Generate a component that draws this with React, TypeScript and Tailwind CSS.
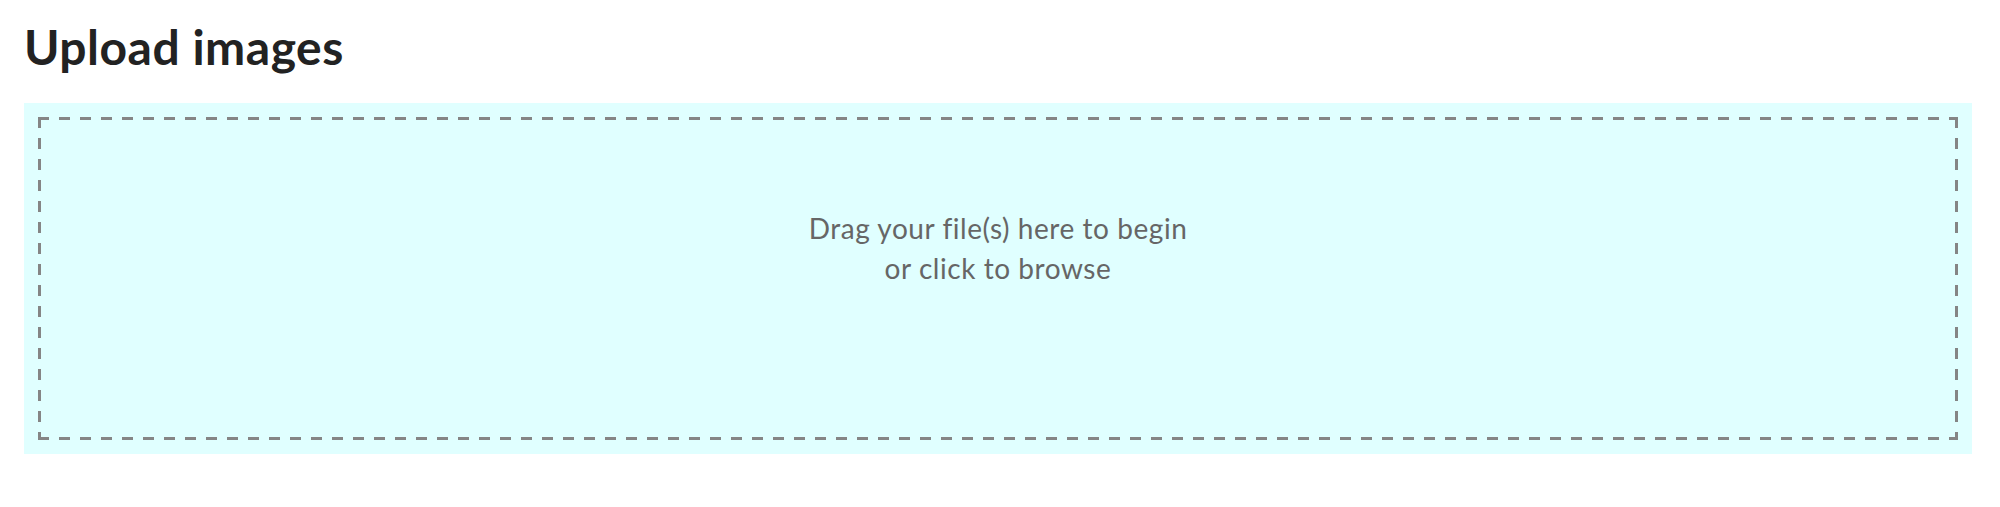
export default function App() {
  return (
    <div className="min-h-[507px] bg-white pl-[24px] pr-[28px] pt-[18px] font-['Lato',sans-serif]">
      <h1 className="text-[48px] font-bold leading-[58px] tracking-[0.5px] text-[#222222]">
        Upload images
      </h1>
      <div className="mt-[27px] h-[351px] bg-[#e0ffff] p-[14px]">
        <div className="flex h-full flex-col items-center bg-[repeating-linear-gradient(90deg,#858585_0_11px,transparent_11px_21px),repeating-linear-gradient(90deg,#858585_0_11px,transparent_11px_21px),repeating-linear-gradient(180deg,#858585_0_11px,transparent_11px_21px),repeating-linear-gradient(180deg,#858585_0_11px,transparent_11px_21px)] bg-[length:100%_3px,100%_3px,3px_100%,3px_100%] bg-[position:0_0,0_100%,0_0,100%_0] bg-no-repeat pt-[91px] text-center text-[28px] leading-[40px] tracking-[0.55px] text-[#666666]">
          <p>Drag your file(s) here to begin</p>
          <p>or click to browse</p>
        </div>
      </div>
    </div>
  );
}
